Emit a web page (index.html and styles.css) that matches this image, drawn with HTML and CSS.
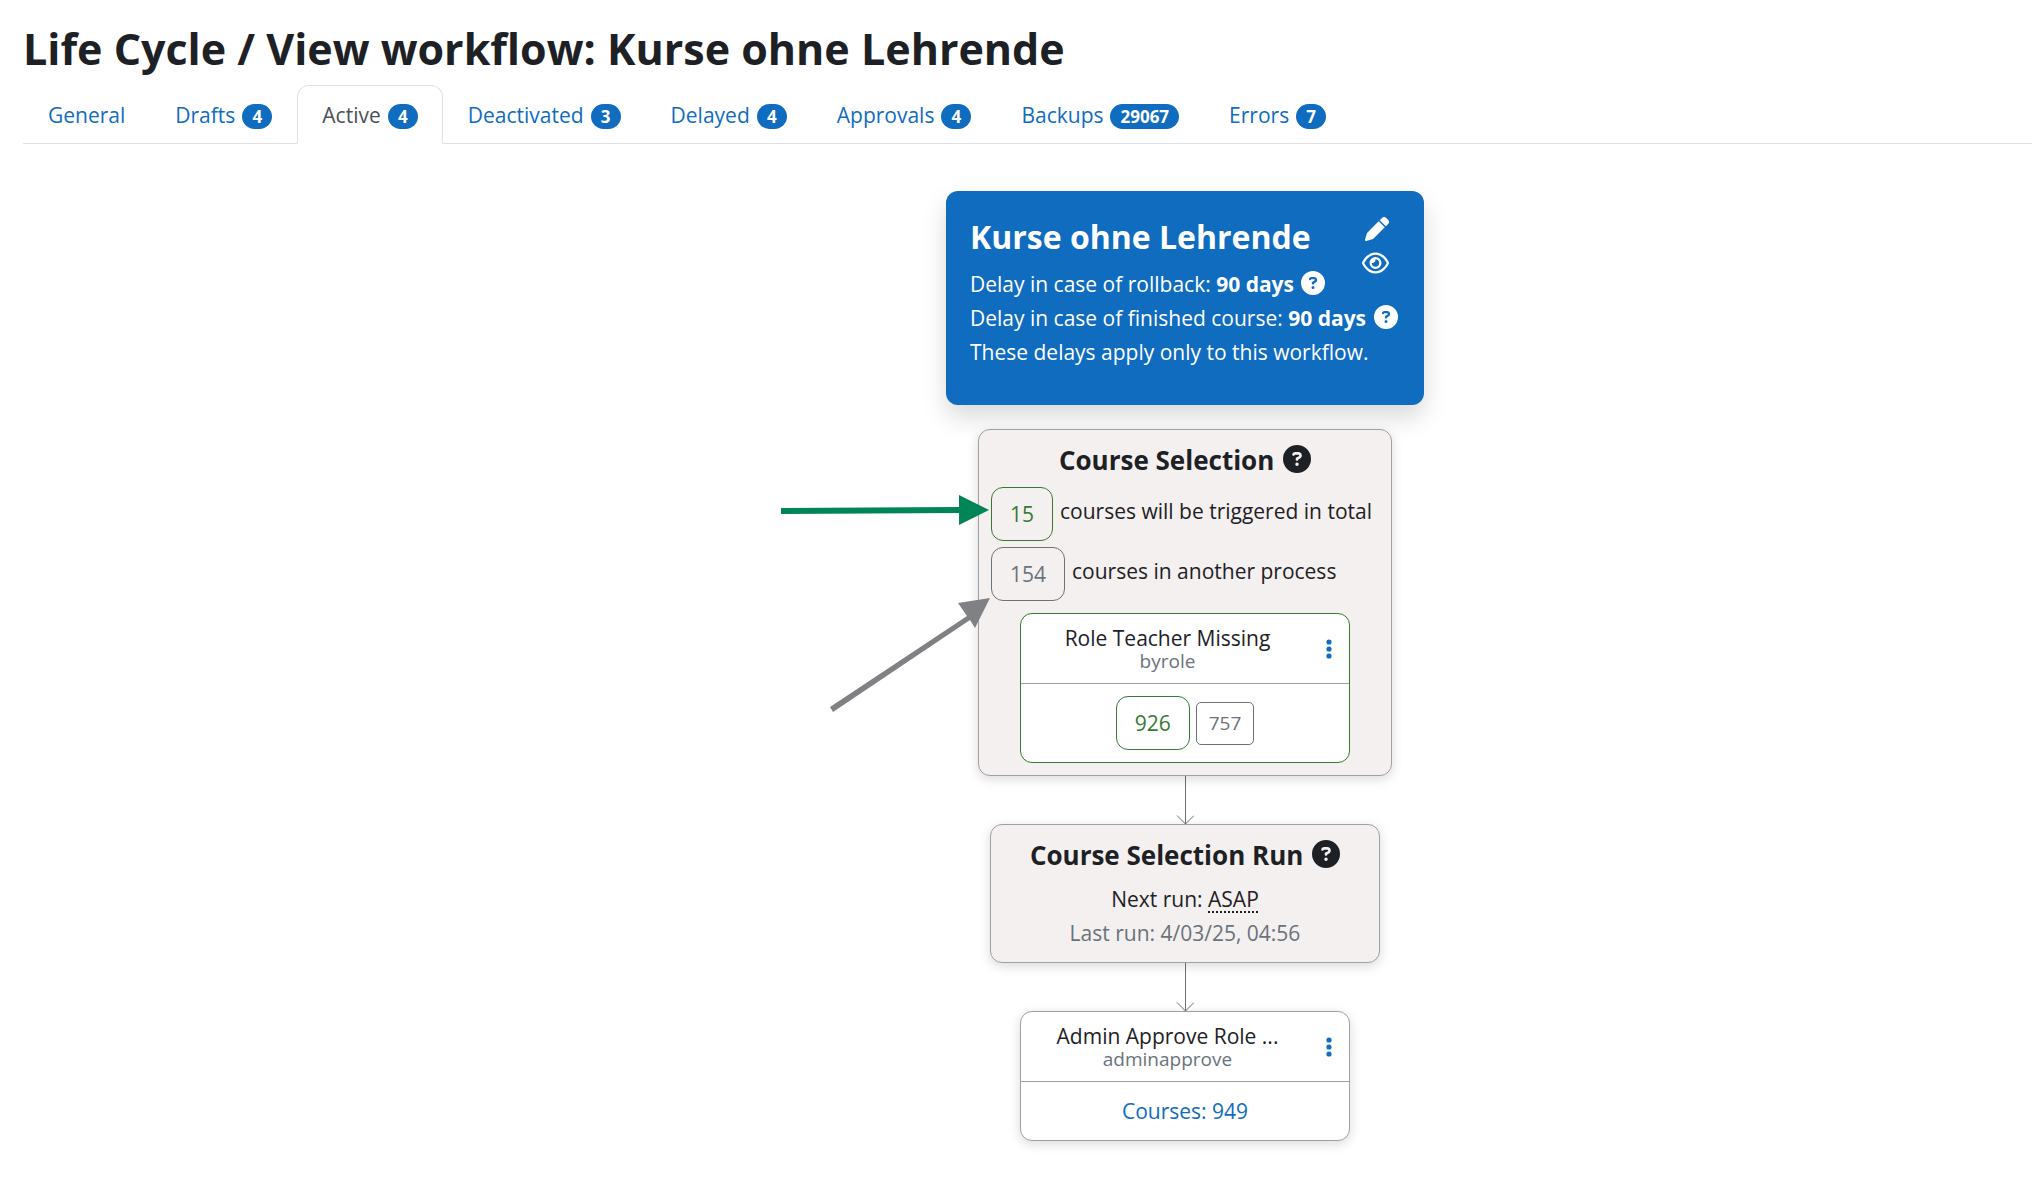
FILE: index.html
```html
<!DOCTYPE html>
<html lang="en">
<head>
<meta charset="utf-8">
<meta name="viewport" content="width=device-width, initial-scale=1">
<title>Life Cycle / View workflow: Kurse ohne Lehrende</title>
<link rel="stylesheet" href="styles.css">
</head>
<body>
<svg class="sprite" aria-hidden="true">
  <symbol id="question" viewBox="0 0 512 512"><path d="M256 512A256 256 0 1 0 256 0a256 256 0 1 0 0 512zM169.8 165.3c7.9-22.3 29.1-37.3 52.8-37.3h58.3c34.9 0 63.1 28.3 63.1 63.1c0 22.6-12.1 43.5-31.7 54.8L280 264.4c-.2 13-10.9 23.6-24 23.6c-13.3 0-24-10.7-24-24V250.5c0-8.6 4.6-16.5 12.1-20.8l44.3-25.4c4.7-2.7 7.6-7.7 7.6-13.1c0-8.4-6.8-15.1-15.1-15.1H222.6c-3.4 0-6.4 2.1-7.5 5.3l-.4 1.2c-4.4 12.5-18.2 19-30.6 14.6s-19-18.2-14.6-30.6l.4-1.2zM224 352a32 32 0 1 1 64 0 32 32 0 1 1 -64 0z"/></symbol>
  <symbol id="pen" viewBox="0 0 512 512"><path d="M362.7 19.3L314.3 67.7 444.3 197.7l48.4-48.4c25-25 25-65.5 0-90.5L453.3 19.3c-25-25-65.5-25-90.5 0zm-71 71L58.6 323.5c-10.4 10.4-18 23.3-22.2 37.4L1 481.2C-1.5 489.7 .8 498.8 7 505s15.3 8.5 23.7 6.1l120.3-35.4c14.1-4.2 27-11.8 37.4-22.2L421.7 220.3 291.7 90.3z"/></symbol>
  <symbol id="eye" viewBox="0 0 576 512"><path d="M288 80c-65.2 0-118.8 29.6-159.9 67.7C89.6 183.5 63 226 49.4 256c13.6 30 40.2 72.5 78.6 108.3C169.2 402.4 222.8 432 288 432s118.8-29.6 159.9-67.7C486.4 328.5 513 286 526.6 256c-13.6-30-40.2-72.5-78.6-108.3C406.8 109.6 353.2 80 288 80zM95.4 112.6C142.5 68.8 207.2 32 288 32s145.5 36.8 192.6 80.6c46.8 43.5 78.1 95.4 93 131.1c3.3 7.9 3.3 16.7 0 24.6c-14.9 35.7-46.2 87.7-93 131.1C433.5 443.2 368.8 480 288 480s-145.5-36.8-192.6-80.6C48.6 356 17.3 304 2.5 268.3c-3.3-7.9-3.3-16.7 0-24.6C17.3 208 48.6 156 95.4 112.6zM288 336c44.2 0 80-35.8 80-80s-35.8-80-80-80c-.7 0-1.3 0-2 0c1.3 5.1 2 10.5 2 16c0 35.3-28.7 64-64 64c-5.5 0-10.9-.7-16-2c0 .7 0 1.3 0 2c0 44.2 35.8 80 80 80zm0-208a128 128 0 1 1 0 256 128 128 0 1 1 0-256z"/></symbol>
  <symbol id="dots" viewBox="0 0 6 20"><circle cx="3" cy="3" r="2.600"/><circle cx="3" cy="10" r="2.600"/><circle cx="3" cy="17" r="2.600"/></symbol>
  <symbol id="flow-arrow" viewBox="0 0 18 48"><path d="M9.500 0V48M1 39.500L9.500 48L18 39.500" fill="none" stroke="#707070"/></symbol>
</svg>

<h1 class="page-title">Life Cycle / View workflow: Kurse ohne Lehrende</h1>

<nav class="tabs">
  <a class="tab" href="#general">General</a>
  <a class="tab" href="#drafts">Drafts <span class="badge">4</span></a>
  <a class="tab tab-active" href="#active" aria-current="page">Active <span class="badge">4</span></a>
  <a class="tab" href="#deactivated">Deactivated <span class="badge">3</span></a>
  <a class="tab" href="#delayed">Delayed <span class="badge">4</span></a>
  <a class="tab" href="#approvals">Approvals <span class="badge">4</span></a>
  <a class="tab" href="#backups">Backups <span class="badge">29067</span></a>
  <a class="tab" href="#errors">Errors <span class="badge">7</span></a>
</nav>

<main class="workflow">
  <section class="summary">
    <h2 class="summary-title">Kurse ohne Lehrende</h2>
    <p>Delay in case of rollback: <b>90 days</b> <button class="help" aria-label="Help with rollback delay"><svg><use href="#question"/></svg></button></p>
    <p>Delay in case of finished course: <b>90 days</b> <button class="help" aria-label="Help with finished course delay"><svg><use href="#question"/></svg></button></p>
    <p>These delays apply only to this workflow.</p>
    <div class="summary-actions">
      <a href="#edit" aria-label="Edit"><svg class="pen"><use href="#pen"/></svg></a>
      <a href="#view" aria-label="View"><svg class="eye"><use href="#eye"/></svg></a>
    </div>
  </section>

  <section class="box selection">
    <h3 class="box-title">Course Selection <button class="help help-large" aria-label="Help with course selection"><svg><use href="#question"/></svg></button></h3>
    <div class="count-row"><button class="count count-green">15</button><span>courses will be triggered in total</span></div>
    <div class="count-row"><button class="count">154</button><span>courses in another process</span></div>
    <article class="card card-green">
      <header class="card-head">
        <div class="card-name"><div class="card-title">Role Teacher Missing</div><div class="card-type">byrole</div></div>
        <button class="menu" aria-label="Actions"><svg><use href="#dots"/></svg></button>
      </header>
      <div class="card-body card-counts"><button class="count count-green">926</button><button class="count count-small">757</button></div>
    </article>
    <svg class="pointer pointer-green" viewBox="0 0 208 32" aria-hidden="true"><path d="M0 14L178 13V1L208 16L178 31V19L0 20Z" fill="#008557"/></svg>
    <svg class="pointer pointer-gray" viewBox="0 0 160 114" aria-hidden="true"><path d="M0 109L137 18L128 5L160 0L145 30L140 22L3 114Z" fill="#808184"/></svg>
  </section>

  <svg class="flow-arrow" aria-hidden="true"><use href="#flow-arrow"/></svg>

  <section class="box run">
    <h3 class="box-title">Course Selection Run <button class="help help-large" aria-label="Help with course selection run"><svg><use href="#question"/></svg></button></h3>
    <p>Next run: <abbr title="As soon as possible">ASAP</abbr></p>
    <p class="muted">Last run: 4/03/25, 04:56</p>
  </section>

  <svg class="flow-arrow" aria-hidden="true"><use href="#flow-arrow"/></svg>

  <article class="card card-shadow">
    <header class="card-head">
      <div class="card-name"><div class="card-title">Admin Approve Role ...</div><div class="card-type">adminapprove</div></div>
      <button class="menu" aria-label="Actions"><svg><use href="#dots"/></svg></button>
    </header>
    <div class="card-body"><a href="#courses">Courses: 949</a></div>
  </article>
</main>
</body>
</html>
```
FILE: styles.css
```css
* { box-sizing: border-box; }

body {
  margin: 0;
  padding: 24px 0 24px 23px;
  background: #fff;
  color: #1d2125;
  font: 21px/34px "Open Sans", "Noto Sans", sans-serif;
}

h1, h2, h3, p { margin: 0; }
a { color: #0f6cbf; text-decoration: none; }
button { padding: 0; border: 0; background: none; color: inherit; font: inherit; cursor: pointer; }
svg { display: block; fill: currentColor; }
.sprite { position: absolute; width: 0; height: 0; }

.page-title { font-size: 43px; line-height: 50px; font-weight: 700; }

.tabs {
  display: flex;
  margin-top: 11px;
  border-bottom: 1px solid #dee2e6;
}
.tab {
  display: flex;
  align-items: center;
  gap: 7px;
  height: 59px;
  margin-bottom: -1px;
  padding: 0 24px;
  border: 1px solid transparent;
  border-radius: 12px 12px 0 0;
}
.tab-active { border-color: #dee2e6 #dee2e6 #fff; background: #fff; color: #495057; }
.badge {
  min-width: 30px;
  margin-top: 3px;
  padding: 0 10px;
  border-radius: 13px;
  background: #0f6cbf;
  color: #fff;
  font-size: 17px;
  line-height: 25px;
  font-weight: 700;
  text-align: center;
}

.workflow {
  display: flex;
  flex-direction: column;
  align-items: center;
  margin-top: 47px;
  padding-left: 315px;
}

.summary {
  position: relative;
  width: 478px;
  padding: 22px 20px 36px 24px;
  border-radius: 12px;
  background: #0f6cbf;
  color: #fff;
  box-shadow: 0 12px 24px rgba(0, 0, 0, .15);
  white-space: nowrap;
}
.summary-title { margin-bottom: 6px; font-size: 32px; line-height: 48px; font-weight: 700; }
.summary-actions {
  position: absolute;
  top: 21px;
  right: 35px;
  display: flex;
  flex-direction: column;
  align-items: flex-end;
}
.summary-actions a { display: flex; align-items: center; height: 34px; color: #fff; }
.pen { width: 24px; height: 24px; }
.eye { width: 27px; height: 24px; }

.help { display: inline-block; margin-left: 2px; vertical-align: -3px; line-height: 1; }
.help svg { width: 24px; height: 24px; }
.help-large svg { width: 28px; height: 28px; }

.box {
  position: relative;
  border: 1px solid #a0a0a0;
  border-radius: 12px;
  background: #f4f0ef;
  box-shadow: 0 3px 12px rgba(0, 0, 0, .15);
  white-space: nowrap;
}
.box-title { font-size: 26px; line-height: 34px; font-weight: 700; text-align: center; }

.selection { width: 414px; margin-top: 24px; padding: 13px 12px 12px; }
.selection .box-title { margin-bottom: 10px; }
.count-row { display: flex; gap: 7px; margin-bottom: 6px; line-height: 48px; }
.count {
  height: 54px;
  padding: 0 18px;
  border: 1px solid #6a737b;
  border-radius: 12px;
  color: #6a737b;
}
.count-green { border-color: #357a32; color: #357a32; }
.count-small { height: 43px; padding: 0 12px; border-radius: 5px; font-size: 19px; line-height: 40px; }

.card {
  width: 330px;
  border: 1px solid #a0a0a0;
  border-radius: 12px;
  background: #fff;
  text-align: center;
}
.card-green { margin: 12px auto 0; border-color: #357a32; }
.card-shadow { box-shadow: 0 3px 12px rgba(0, 0, 0, .15); }
.card-head {
  display: flex;
  align-items: center;
  height: 70px;
  padding: 0 17px 0 12px;
  border-bottom: 1px solid #a0a0a0;
}
.card-name { flex: 1; padding: 2px 24px 0 0; line-height: 23px; }
.card-type { color: #6a737b; font-size: 19px; }
.menu svg { width: 6px; height: 20px; }
.menu { color: #0f6cbf; }
.card-body { padding: 12px; }
.card-counts { display: flex; align-items: center; justify-content: center; gap: 6px; }

.pointer { position: absolute; }
.pointer-green { top: 64px; left: -198px; width: 208px; height: 32px; }
.pointer-gray { top: 168px; left: -149px; width: 160px; height: 114px; }

.flow-arrow { width: 18px; height: 48px; }

.run { width: 390px; padding: 13px 12px 12px; text-align: center; }
.run .box-title { margin-bottom: 10px; }
.muted { color: #6a737b; }
abbr { text-decoration: underline dotted; text-underline-offset: 4px; }
```
